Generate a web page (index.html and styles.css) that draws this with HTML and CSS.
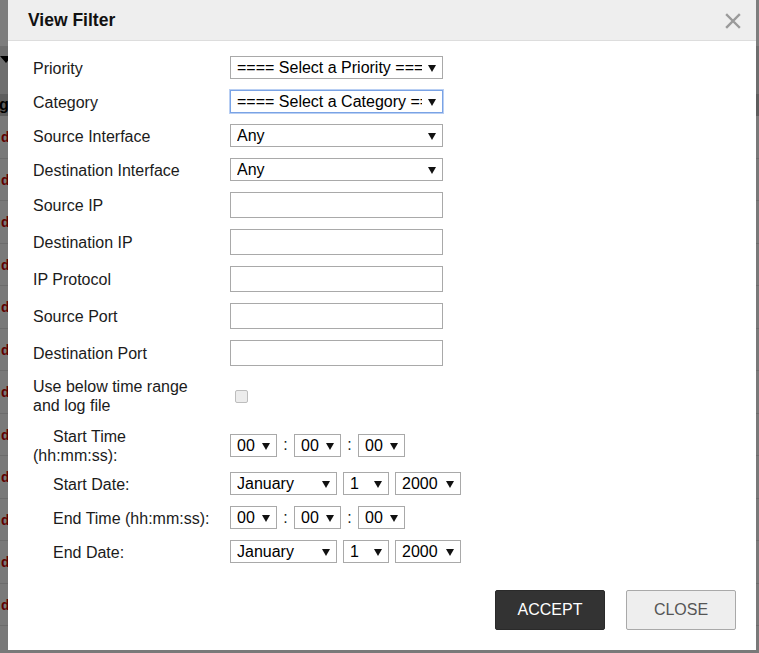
FILE: index.html
```html
<!DOCTYPE html>
<html>
<head>
<meta charset="utf-8">
<title>View Filter</title>
<link rel="stylesheet" href="styles.css">
</head>
<body>
<div class="page">
  <div class="page-top"></div>
  <div class="page-bar"><span class="caret"></span></div>
  <div class="page-head">g</div>
  <div class="page-rows">
    <div class="prow">dle</div><div class="prow">dle</div><div class="prow">dle</div>
    <div class="prow">dle</div><div class="prow">dle</div><div class="prow">dle</div>
    <div class="prow">dle</div><div class="prow">dle</div><div class="prow">dle</div>
    <div class="prow">dle</div><div class="prow">dle</div><div class="prow">dle</div>
  </div>
</div>
<div class="overlay"></div>

<div class="modal">
  <div class="modal-header">
    <h3 class="modal-title">View Filter</h3>
    <svg class="modal-x" width="16" height="16" viewBox="0 0 16 16" aria-label="close">
      <path d="M2 2 L14 14 M14 2 L2 14" stroke="#9a9a9a" stroke-width="2.4" stroke-linecap="square" fill="none"/>
    </svg>
  </div>
  <div class="modal-body">
    <div class="form">
      <div class="row r-sel">
        <label class="lbl">Priority</label>
        <span class="sel w-wide"><select><option>==== Select a Priority ====</option></select></span>
      </div>
      <div class="row r-sel">
        <label class="lbl">Category</label>
        <span class="sel w-wide focus"><select><option>==== Select a Category ====</option></select></span>
      </div>
      <div class="row r-sel">
        <label class="lbl">Source Interface</label>
        <span class="sel w-wide"><select><option>Any</option></select></span>
      </div>
      <div class="row r-sel">
        <label class="lbl">Destination Interface</label>
        <span class="sel w-wide"><select><option>Any</option></select></span>
      </div>
      <div class="row r-in">
        <label class="lbl">Source IP</label>
        <input class="txt" type="text">
      </div>
      <div class="row r-in">
        <label class="lbl">Destination IP</label>
        <input class="txt" type="text">
      </div>
      <div class="row r-in">
        <label class="lbl">IP Protocol</label>
        <input class="txt" type="text">
      </div>
      <div class="row r-in">
        <label class="lbl">Source Port</label>
        <input class="txt" type="text">
      </div>
      <div class="row r-in">
        <label class="lbl">Destination Port</label>
        <input class="txt" type="text">
      </div>
      <div class="row r-two r-use">
        <label class="lbl">Use below time range and log file</label>
        <span class="chk"></span>
      </div>
      <div class="row r-two">
        <label class="lbl ind">Start Time (hh:mm:ss):</label>
        <div class="ctrls">
          <span class="sel w-t"><select><option>00</option></select></span>
          <span class="colon">:</span>
          <span class="sel w-t"><select><option>00</option></select></span>
          <span class="colon">:</span>
          <span class="sel w-t"><select><option>00</option></select></span>
        </div>
      </div>
      <div class="row r-sel">
        <label class="lbl ind">Start Date:</label>
        <div class="ctrls gap-d">
          <span class="sel w-m"><select><option>January</option></select></span>
          <span class="sel w-d"><select><option>1</option></select></span>
          <span class="sel w-y"><select><option>2000</option></select></span>
        </div>
      </div>
      <div class="row r-sel">
        <label class="lbl ind">End Time (hh:mm:ss):</label>
        <div class="ctrls">
          <span class="sel w-t"><select><option>00</option></select></span>
          <span class="colon">:</span>
          <span class="sel w-t"><select><option>00</option></select></span>
          <span class="colon">:</span>
          <span class="sel w-t"><select><option>00</option></select></span>
        </div>
      </div>
      <div class="row r-sel">
        <label class="lbl ind">End Date:</label>
        <div class="ctrls gap-d">
          <span class="sel w-m"><select><option>January</option></select></span>
          <span class="sel w-d"><select><option>1</option></select></span>
          <span class="sel w-y"><select><option>2000</option></select></span>
        </div>
      </div>
    </div>
  </div>
  <div class="modal-footer">
    <button class="btn btn-dark">ACCEPT</button>
    <button class="btn btn-light">CLOSE</button>
  </div>
</div>
</body>
</html>
```

FILE: styles.css
```css
* { box-sizing: border-box; }
html, body {
  margin: 0;
  padding: 0;
  width: 759px;
  height: 653px;
  overflow: hidden;
  font-family: "Liberation Sans", Arial, sans-serif;
  color: #1b1b1b;
}

/* underlying page */
.page {
  width: 759px;
  height: 653px;
  background: #f2f2f2;
  display: flex;
  flex-direction: column;
}
.page-top { height: 46px; background: #fafafa; }
.page-bar { height: 48px; background: #dcdcdc; position: relative; }
.caret {
  position: absolute;
  left: 0;
  top: 10px;
  width: 0; height: 0;
  border-left: 6px solid transparent;
  border-right: 6px solid transparent;
  border-top: 7px solid #000;
}
.page-head {
  height: 22px;
  background: #bbb;
  font: bold 16px "Liberation Sans", sans-serif;
  color: #000;
  line-height: 22px;
  text-indent: -1px;
}
.page-rows { display: flex; flex-direction: column; }
.prow {
  height: 42.5px;
  border-bottom: 1px solid #d8d8d8;
  color: #c00000;
  font-size: 14px;
  line-height: 42px;
  padding-left: 1px;
  font-weight: bold;
}
.overlay {
  position: fixed;
  inset: 0;
  background: rgba(0, 0, 0, 0.5);
}

/* modal */
.modal {
  position: fixed;
  left: 8px;
  top: 0;
  width: 748px;
  height: 650px;
  background: #fff;
  display: flex;
  flex-direction: column;
}
.modal-header {
  height: 41px;
  background: #eeeeee;
  border-bottom: 1px solid #dddddd;
  display: flex;
  align-items: center;
  justify-content: space-between;
  padding: 1px 15px 0 20px;
}
.modal-title {
  margin: 0;
  font-size: 17.5px;
  font-weight: bold;
  color: #111;
}
.modal-x { display: block; }
.modal-body {
  padding: 15px 0 0 25px;
  flex: 1;
}
.form {
  display: flex;
  flex-direction: column;
  gap: 11px;
}
.row {
  display: grid;
  grid-template-columns: 180px auto;
  column-gap: 17px;
  align-items: center;
  font-size: 16px;
}
.r-sel { height: 23px; }
.r-in { height: 26px; }
.r-two { height: 36px; }
.r-use { height: 37px; }
.r-use .lbl { padding-top: 1px; }
.lbl {
  line-height: 18.5px;
  padding-top: 3px;
  color: #1b1b1b;
}
.ind { text-indent: 20px; }

.sel {
  position: relative;
  display: inline-block;
  height: 23px;
}
.sel select {
  appearance: none;
  -webkit-appearance: none;
  width: 100%;
  height: 23px;
  border: 1px solid #a9a9a9;
  border-radius: 0;
  background: #fff;
  font-family: "Liberation Sans", Arial, sans-serif;
  font-size: 16px;
  color: #000;
  padding: 0 20px 0 6px;
  margin: 0;
  line-height: 21px;
  outline: none;
}
.sel::after {
  content: "";
  position: absolute;
  right: 7px;
  top: 9px;
  border-left: 4px solid transparent;
  border-right: 4px solid transparent;
  border-top: 7px solid #111;
  pointer-events: none;
}
.sel.focus select {
  border-color: #7aa3e5;
  box-shadow: 0 0 0 1px #b9cff3;
}
.w-wide { width: 213px; }
.w-t { width: 47px; }
.w-m { width: 107px; }
.w-d { width: 46px; }
.w-y { width: 66px; }

.ctrls {
  display: flex;
  align-items: center;
}
.colon {
  width: 17px;
  text-align: center;
  font-size: 16px;
}
.gap-d { gap: 6px; }

.txt {
  width: 213px;
  height: 26px;
  border: 1px solid #a9a9a9;
  margin: 0;
  padding: 0 4px;
  background: #fff;
  outline: none;
}
.chk {
  width: 13px;
  height: 13px;
  margin-left: 5px;
  border: 1px solid #bdbdbd;
  border-radius: 2px;
  background: #ececec;
}

.modal-footer {
  display: flex;
  justify-content: flex-end;
  gap: 21px;
  padding: 0 20px 20px 0;
}
.btn {
  width: 110px;
  height: 40px;
  font-family: "Liberation Sans", Arial, sans-serif;
  font-size: 16px;
  border-radius: 2px;
  cursor: pointer;
  padding: 0;
}
.btn-dark {
  background: #333333;
  color: #fff;
  border: 1px solid #2a2a2a;
}
.btn-light {
  background: #eeeeee;
  color: #555;
  border: 1px solid #a9a9a9;
}
```
